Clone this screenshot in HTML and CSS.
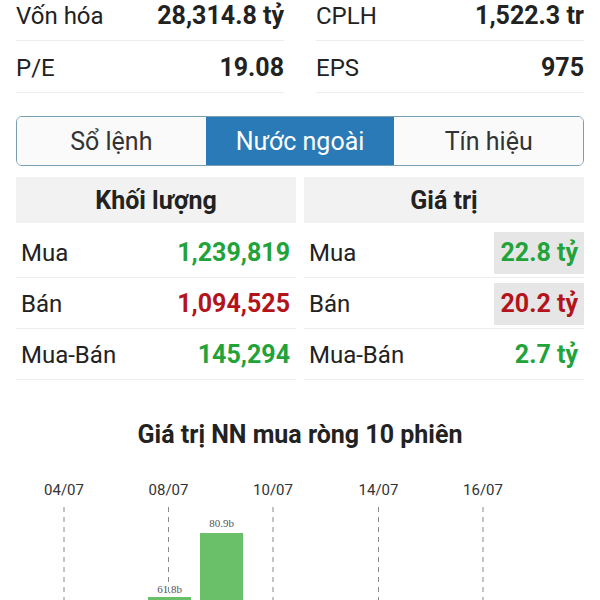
FILE: index.html
```html
<!DOCTYPE html>
<html lang="vi">
<head>
    <meta charset="UTF-8">
    <meta name="viewport" content="width=device-width, initial-scale=1.0">
    <title>Nước ngoài</title>
    <link rel="stylesheet" href="styles.css">
</head>
<body>

    <div class="page">
        <div class="stats">
            <div class="stat-col">
                <div class="stat-row"><span>Vốn hóa</span><span class="stat-value">28,314.8 tỷ</span></div>
                <div class="stat-row"><span>P/E</span><span class="stat-value">19.08</span></div>
            </div>
            <div class="stat-col">
                <div class="stat-row"><span>CPLH</span><span class="stat-value">1,522.3 tr</span></div>
                <div class="stat-row"><span>EPS</span><span class="stat-value">975</span></div>
            </div>
        </div>

        <div class="tabs">
            <div class="tab">Sổ lệnh</div>
            <div class="tab active">Nước ngoài</div>
            <div class="tab">Tín hiệu</div>
        </div>

        <div class="foreign">
            <div class="foreign-col">
                <div class="foreign-head">Khối lượng</div>
                <div class="foreign-row"><span>Mua</span><span class="value up">1,239,819</span></div>
                <div class="foreign-row"><span>Bán</span><span class="value down">1,094,525</span></div>
                <div class="foreign-row"><span>Mua-Bán</span><span class="value up">145,294</span></div>
            </div>
            <div class="foreign-col">
                <div class="foreign-head">Giá trị</div>
                <div class="foreign-row"><span>Mua</span><span class="value up mark">22.8 tỷ</span></div>
                <div class="foreign-row"><span>Bán</span><span class="value down mark">20.2 tỷ</span></div>
                <div class="foreign-row"><span>Mua-Bán</span><span class="value up">2.7 tỷ</span></div>
            </div>
        </div>

        <h3 class="chart-title">Giá trị NN mua ròng 10 phiên</h3>

        <svg class="chart" width="600" height="160" viewBox="0 0 600 160">
            <g class="grid">
                <line x1="64" y1="47" x2="64" y2="160"/>
                <line x1="168.5" y1="47" x2="168.5" y2="160"/>
                <line x1="273" y1="47" x2="273" y2="160"/>
                <line x1="378.5" y1="47" x2="378.5" y2="160"/>
                <line x1="483" y1="47" x2="483" y2="160"/>
            </g>
            <g class="dates">
                <text x="64" y="35">04/07</text>
                <text x="168.5" y="35">08/07</text>
                <text x="273" y="35">10/07</text>
                <text x="378.5" y="35">14/07</text>
                <text x="483" y="35">16/07</text>
            </g>
            <rect class="bar" x="148" y="137" width="43" height="30"/>
            <rect class="bar" x="200" y="73" width="43" height="100"/>
            <g class="bar-label">
                <text x="169.5" y="133">61.8b</text>
                <text x="221.5" y="67">80.9b</text>
            </g>
        </svg>
    </div>

</body>
</html>
```

FILE: styles.css
```css
body {
    font-family: Roboto, "Noto Sans", sans-serif;
    margin: 0;
    background: #fff;
    color: #222;
    overflow: hidden;
}
/* page is scrolled a little, first row is cut */
.page {
    margin-top: -11px;
    padding: 0 16px;
}
.stats {
    display: grid;
    grid-template-columns: 1fr 1fr;
    column-gap: 32px;
}
.stat-row {
    display: flex;
    justify-content: space-between;
    align-items: center;
    height: 49px;
    padding-top: 2px;
    border-bottom: 1px solid #ececec;
    font-size: 24px;
}
.stat-value {
    font-weight: bold;
    font-size: 25px;
}
/* Tabs */
.tabs {
    display: flex;
    height: 48px;
    margin-top: 23px;
    border: 1px solid #7a9fb2;
    border-radius: 6px;
    overflow: hidden;
}
.tab {
    flex: 1;
    display: flex;
    justify-content: center;
    align-items: center;
    font-size: 25px;
    color: #333;
    background: #fafafa;
}
.tab.active {
    background: #2a7ab8;
    color: #fff;
}
/* Foreign trading table */
.foreign {
    display: grid;
    grid-template-columns: 1fr 1fr;
    column-gap: 8px;
    margin-top: 11px;
}
.foreign-head {
    display: flex;
    justify-content: center;
    align-items: center;
    height: 46px;
    margin-bottom: 4px;
    background: #f2f2f2;
    font-size: 25px;
    font-weight: bold;
}
.foreign-row {
    display: flex;
    justify-content: space-between;
    align-items: center;
    height: 48px;
    padding: 2px 0 0 5px;
    border-bottom: 1px solid #ececec;
    font-size: 24px;
}
.value {
    font-weight: bold;
    font-size: 25px;
    line-height: 42px;
    padding: 0 6px;
}
.value.mark {
    background: #e6e6e6;
}
.up {
    color: #22a33a;
}
.down {
    color: #b3141c;
}
/* Chart */
.chart-title {
    margin: 40px 0 0;
    text-align: center;
    font-size: 25px;
    line-height: 30px;
}
.chart {
    display: block;
    margin: 10px -16px 0;
}
.grid line {
    stroke: #8a8a8a;
    stroke-width: 1;
    stroke-dasharray: 5 5;
}
.dates text {
    font-family: Roboto, sans-serif;
    font-size: 15px;
    fill: #333;
    text-anchor: middle;
}
.bar {
    fill: #6abf69;
}
.bar-label text {
    font-family: "Liberation Serif", serif;
    font-size: 11px;
    fill: #555;
    text-anchor: middle;
}
```
